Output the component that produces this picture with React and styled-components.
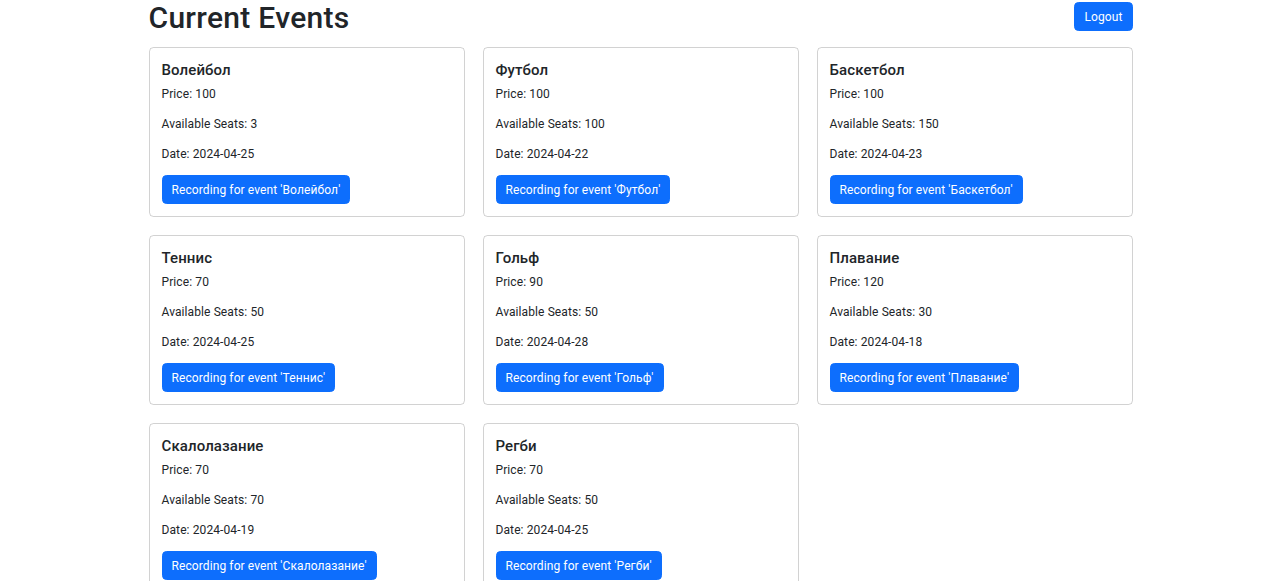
import React from 'react'
import styled, { createGlobalStyle } from 'styled-components'

const events = [
  { name: 'Волейбол', price: 100, seats: 3, date: '2024-04-25' },
  { name: 'Футбол', price: 100, seats: 100, date: '2024-04-22' },
  { name: 'Баскетбол', price: 100, seats: 150, date: '2024-04-23' },
  { name: 'Теннис', price: 70, seats: 50, date: '2024-04-25' },
  { name: 'Гольф', price: 90, seats: 50, date: '2024-04-28' },
  { name: 'Плавание', price: 120, seats: 30, date: '2024-04-18' },
  { name: 'Скалолазание', price: 70, seats: 70, date: '2024-04-19' },
  { name: 'Регби', price: 70, seats: 50, date: '2024-04-25' },
]

const GlobalStyle = createGlobalStyle`
  body {
    margin: 0;
    background: #fff;
    color: #212529;
    font-family: "Segoe UI", Roboto, "Noto Sans", sans-serif;
    font-size: 12px;
    line-height: 1.5;
    letter-spacing: 0.1px;
  }
`

const Container = styled.div`
  max-width: 984px;
  margin: 0 auto;
  padding: 0 0 0 1px;
`

const Header = styled.div`
  display: flex;
  justify-content: space-between;
  align-items: flex-start;
  margin-bottom: 11px;
`

const Title = styled.h1`
  margin: 0;
  font-size: 30px;
  font-weight: 500;
  line-height: 36px;
  letter-spacing: 0.3px;
`

const Button = styled.button`
  display: inline-block;
  font-family: inherit;
  font-size: 12px;
  line-height: 18px;
  letter-spacing: 0.1px;
  color: #fff;
  background: #0d6efd;
  border: 1px solid #0d6efd;
  border-radius: 4.5px;
  padding: 5px 9px 4px;
  cursor: pointer;
  align-self: flex-start;
  margin-top: ${(p) => (p.$top ? '2px' : '0')};
`

const Grid = styled.div`
  display: grid;
  grid-template-columns: repeat(3, 1fr);
  column-gap: 18px;
  row-gap: 18px;
`

const Card = styled.div`
  border: 1px solid rgba(0, 0, 0, 0.175);
  border-radius: 4.5px;
  padding: 13px 12px 12px;
  display: flex;
  flex-direction: column;
`

const CardTitle = styled.h5`
  margin: 0 0 6px;
  font-size: 15px;
  font-weight: 500;
  line-height: 18px;
`

const Text = styled.p`
  margin: 0 0 12px;
`

export default function App() {
  return (
    <>
      <GlobalStyle />
      <Container>
        <Header>
          <Title>Current Events</Title>
          <Button $top>Logout</Button>
        </Header>
        <Grid>
          {events.map((e) => (
            <Card key={e.name}>
              <CardTitle>{e.name}</CardTitle>
              <Text>Price: {e.price}</Text>
              <Text>Available Seats: {e.seats}</Text>
              <Text>Date: {e.date}</Text>
              <Button>Recording for event '{e.name}'</Button>
            </Card>
          ))}
        </Grid>
      </Container>
    </>
  )
}
